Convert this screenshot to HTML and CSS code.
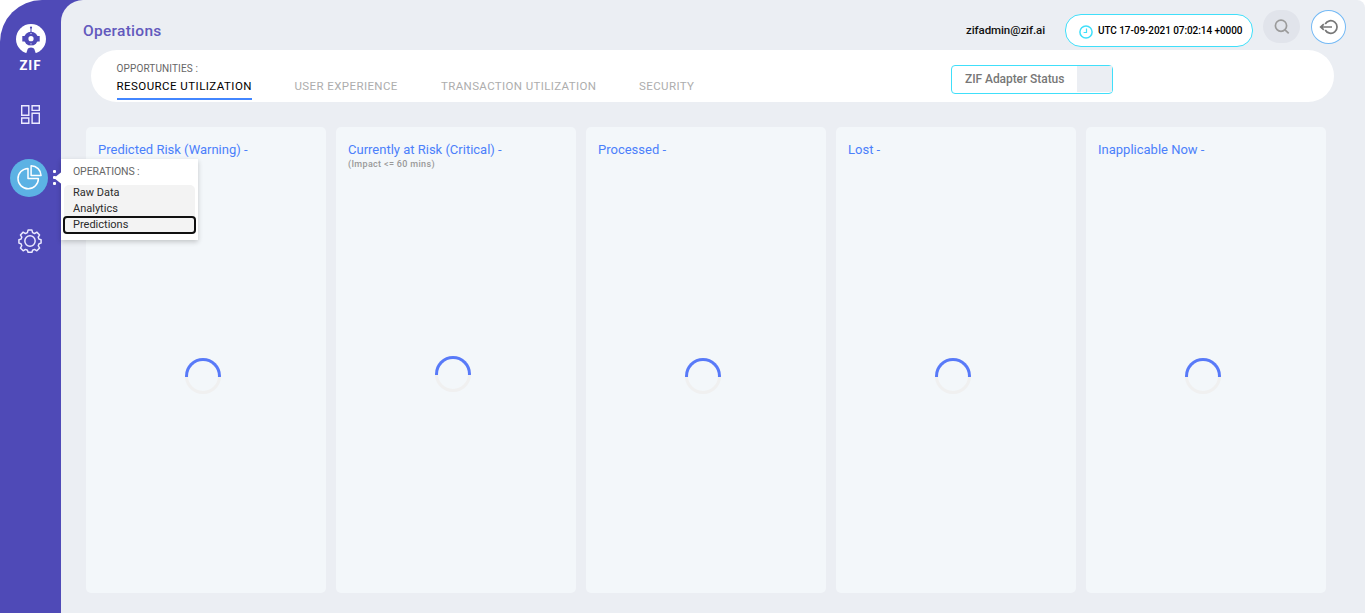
FILE: index.html
```html
<!DOCTYPE html>
<html lang="en">
<head>
<meta charset="utf-8">
<title>Operations</title>
<link rel="stylesheet" href="styles.css">
</head>
<body>
<div class="app">
  <nav class="sidebar">
    <a class="logo">
      <svg width="30" height="30" viewBox="0 0 30 30"><circle cx="15" cy="15" r="15" fill="#fff"/><path d="M10 30l1.7-5q.5-1.5 3.3-1.5t3.3 1.5l1.7 5z" fill="#4f4ab7"/><circle cx="15" cy="14.7" r="7" fill="#4f4ab7"/><path d="M6.3 12h17.4v5.4H6.3zM14.5 4h1v5h-1z" fill="#4f4ab7"/><path d="M12 22.7q3-1.2 6 0" fill="none" stroke="#fff" stroke-width="1.4"/><circle cx="15" cy="3.6" r="1.1" fill="#4f4ab7"/><circle cx="15" cy="14.7" r="2.6" fill="#fff"/><circle cx="15" cy="9.6" r=".6" fill="#fff"/><circle cx="15" cy="19.8" r=".6" fill="#fff"/></svg>
      <span class="brand">ZIF</span>
    </a>
    <a class="nav-item dashboard"><svg width="19" height="19" viewBox="0 0 19 19" fill="none" stroke="#eceaff" stroke-width="1.4"><path d="M.7.7h7.1v9.5H.7zM11.1.7h7.2v4.7h-7.2zM.7 13h7.1v5.3H.7zM11.1 8.2h7.2v10.1h-7.2z"/></svg></a>
    <a class="nav-item active"><svg width="25" height="25" viewBox="0 0 25 25" fill="none" stroke="#fff" stroke-width="1.5" stroke-linejoin="round"><path d="M11 3.4A10.2 10.2 0 1 0 21.4 13.6H11zM14.1.8V10.6H24.1A10 10 0 0 0 14.1.8z"/></svg></a>
    <a class="nav-item settings"><svg width="24" height="24" viewBox="0 0 26 26" fill="none" stroke="#eceaff" stroke-width="1.6" stroke-linejoin="round"><path d="M10.9 1.2h4.2l.7 2.8 2.1.9 2.5-1.5 3 3-1.5 2.5.9 2.1 2.2.7v3.6l-2.2.7-.9 2.1 1.5 2.5-3 3-2.5-1.5-2.1.9-.7 2.2h-4.2l-.7-2.2-2.1-.9-2.5 1.5-3-3 1.5-2.5-.9-2.1-2.2-.7v-3.6l2.2-.7.9-2.1-1.5-2.5 3-3 2.5 1.5 2.1-.9z"/><circle cx="13" cy="13" r="5.6"/></svg></a>
  </nav>

  <main class="main">
    <header class="header">
      <h1 class="title">Operations</h1>
      <span class="user">zifadmin@zif.ai</span>
      <div class="clock">
        <svg width="14" height="14" viewBox="0 0 14 14" fill="none" stroke="#40dffa"><circle cx="7" cy="7" r="6.1" stroke-width="1.5"/><path d="M7.5 3.5v4H4.6" stroke-width="1.2"/></svg>
        <span class="time">UTC 17-09-2021 07:02:14 +0000</span>
      </div>
      <div class="search"><svg width="16" height="16" viewBox="0 0 16 16" fill="none" stroke="#9b9b9b" stroke-width="1.7"><circle cx="7" cy="6.7" r="5.6"/><path d="m11 10.8 3.7 3.5"/></svg></div>
      <div class="logout"><svg width="20" height="16" viewBox="0 0 20 16" fill="none" stroke="#777" stroke-width="1.7"><path d="M6.2 5A6.3 6.3 0 1 1 6.2 11M13 8H2M4.8 5.2 1.7 8l3.1 2.8"/></svg></div>
    </header>

    <section class="filter">
      <div class="opportunities">
        <span class="caption">OPPORTUNITIES :</span>
        <div class="tabs">
          <a class="tab selected">RESOURCE UTILIZATION</a>
          <a class="tab experience">USER EXPERIENCE</a>
          <a class="tab transaction">TRANSACTION UTILIZATION</a>
          <a class="tab security">SECURITY</a>
        </div>
      </div>
      <div class="adapter"><span class="adapter-label">ZIF Adapter Status</span><span class="adapter-value"></span></div>
    </section>

    <section class="board">
      <article class="card"><h2 class="card-title">Predicted Risk (Warning) -</h2><i class="spinner"></i></article>
      <article class="card"><h2 class="card-title">Currently at Risk (Critical) -</h2><p class="note">(Impact &lt;= 60 mins)</p><i class="spinner raised"></i></article>
      <article class="card"><h2 class="card-title">Processed -</h2><i class="spinner"></i></article>
      <article class="card"><h2 class="card-title">Lost -</h2><i class="spinner"></i></article>
      <article class="card"><h2 class="card-title">Inapplicable Now -</h2><i class="spinner"></i></article>
    </section>
  </main>

  <aside class="flyout">
    <svg class="pointer" width="12" height="20" viewBox="0 0 12 20"><path d="M8.5 4v12L1 10z" fill="#fff"/><rect x="0" y="2" width="3" height="3" rx="1" fill="#fff"/><rect x="0" y="8" width="3" height="3" rx="1" fill="#fff"/><rect x="0" y="14" width="3" height="3" rx="1" fill="#fff"/></svg>
    <span class="flyout-title">OPERATIONS :</span>
    <div class="menu">
      <a class="menu-item">Raw Data</a>
      <a class="menu-item">Analytics</a>
      <a class="menu-item focused">Predictions</a>
    </div>
  </aside>
</div>
</body>
</html>
```
FILE: styles.css
```css
* { box-sizing: border-box; }
body { margin: 0; background: #fff; font-family: Roboto, "Liberation Sans", sans-serif; overflow: hidden; }
.app { position: relative; display: flex; width: 1365px; height: 613px; background: linear-gradient(90deg, #4f4ab7 120px, transparent 120px); border-top-left-radius: 42px; }
span, a, h1, h2, p { white-space: nowrap; }
h1, h2, p { margin: 0; }

.sidebar { width: 61px; display: flex; flex-direction: column; align-items: center; padding-top: 24px; flex: none; }
.logo { display: flex; flex-direction: column; align-items: center; height: 80px; }
.brand { color: #fff; font: 900 13px/18px Lato, sans-serif; letter-spacing: 1px; margin-top: 2px; }
.nav-item { display: flex; align-items: center; justify-content: center; }
.dashboard { height: 20px; }
.active { width: 38px; height: 38px; border-radius: 50%; background: #5cb2e4; margin: 35px 3px 0 0; }
.active svg { margin-top: -1px; }
.settings { height: 26px; margin: 31px 1px 0 0; }

.main { flex: 1; min-width: 0; background: #ebeef3; border-radius: 22px 8px 0 0; }
.header { height: 50px; display: flex; align-items: flex-start; padding: 10px 18px 0 22px; }
.title { width: 883px; font-size: 15.5px; line-height: 20px; font-weight: 500; letter-spacing: .28px; color: #6259bd; padding-top: 11px; }
.user { width: 99px; font-size: 11.5px; line-height: 20px; font-weight: 500; letter-spacing: -.08px; padding-top: 10px; color: #111; }
.clock { width: 188px; height: 33px; margin-top: 4px; display: flex; align-items: center; padding-left: 13px; gap: 5px; border: 1px solid #40dffa; border-radius: 16px; background: #fff; }
.clock svg { margin-top: 3px; flex: none; }
.time { font-size: 10px; font-weight: 500; letter-spacing: -.07px; }
.search, .logout { display: flex; justify-content: center; align-items: center; height: 33px; flex: none; }
.search { width: 37px; margin-left: 10px; background: #e1e4eb; border-radius: 17px; }
.logout { width: 35px; height: 34px; margin-left: 11px; background: #fff; border: 1px solid #73b9f5; border-radius: 50%; }

.filter { height: 52px; width: 1243px; margin-left: 30px; border-radius: 26px; background: #fff; display: flex; padding-left: 25.5px; }
.opportunities { width: 834.5px; padding-top: 11px; }
.caption { display: block; font-size: 10px; line-height: 15px; letter-spacing: .13px; color: #666; }
.tabs { display: flex; }
.tab { font-size: 11.5px; line-height: 20px; height: 24px; letter-spacing: .4px; color: #adadad; }
.selected { width: 135.5px; letter-spacing: .45px; color: #000; border-bottom: 2px solid #4286ff; }
.experience { margin-left: 42.5px; width: 146.5px; }
.transaction { width: 198px; letter-spacing: .37px; }
.adapter { width: 162px; height: 29px; margin-top: 15px; border: 1px solid #40dffa; border-radius: 4px; display: flex; justify-content: space-between; }
.adapter-label { padding-left: 13px; font-size: 12px; line-height: 27px; font-weight: 500; letter-spacing: -.06px; color: #777; }
.adapter-value { width: 35px; height: 26px; background: #ebeef3; }

.board { display: flex; gap: 10px; padding: 25px 0 0 25px; }
.card { width: 240px; height: 466px; flex: none; border-radius: 5px; background: #f3f7fa; padding: 14px 12px; display: grid; grid-template-rows: 18px 10px 1fr; }
.card-title { font-size: 13px; line-height: 18px; font-weight: 400; color: #4b80fb; }
.note { font-size: 9px; line-height: 10px; font-weight: 500; letter-spacing: .33px; color: #999; }
.spinner { grid-row: 3; width: 36px; height: 36px; margin: 189px 0 0 87px; border: 3px solid transparent; border-radius: 50%; background: linear-gradient(#f3f7fa, #f3f7fa) padding-box, linear-gradient(#587af8 52%, #f0f0f0 52%) border-box; }
.raised { margin-top: 187px; }

.flyout { position: absolute; left: 61px; top: 159px; width: 137px; height: 81px; background: #fff; box-shadow: 0 2px 5px #0003; }
.pointer { position: absolute; left: -8px; top: 9px; }
.flyout-title { display: block; padding: 5px 0 0 12px; font-size: 10.5px; line-height: 15px; letter-spacing: -.1px; color: #666; }
.menu { margin: 6px 3px 0 3px; background: #f3f3f3; border-radius: 5px; height: 49px; }
.menu-item { display: block; padding-left: 9px; font-size: 11px; line-height: 15px; height: 16px; color: #2b2b2b; }
.focused { margin: -1px -1px 0; padding-left: 8px; height: 18px; line-height: 14px; border: 2px solid #101010; border-radius: 4px; }
```
